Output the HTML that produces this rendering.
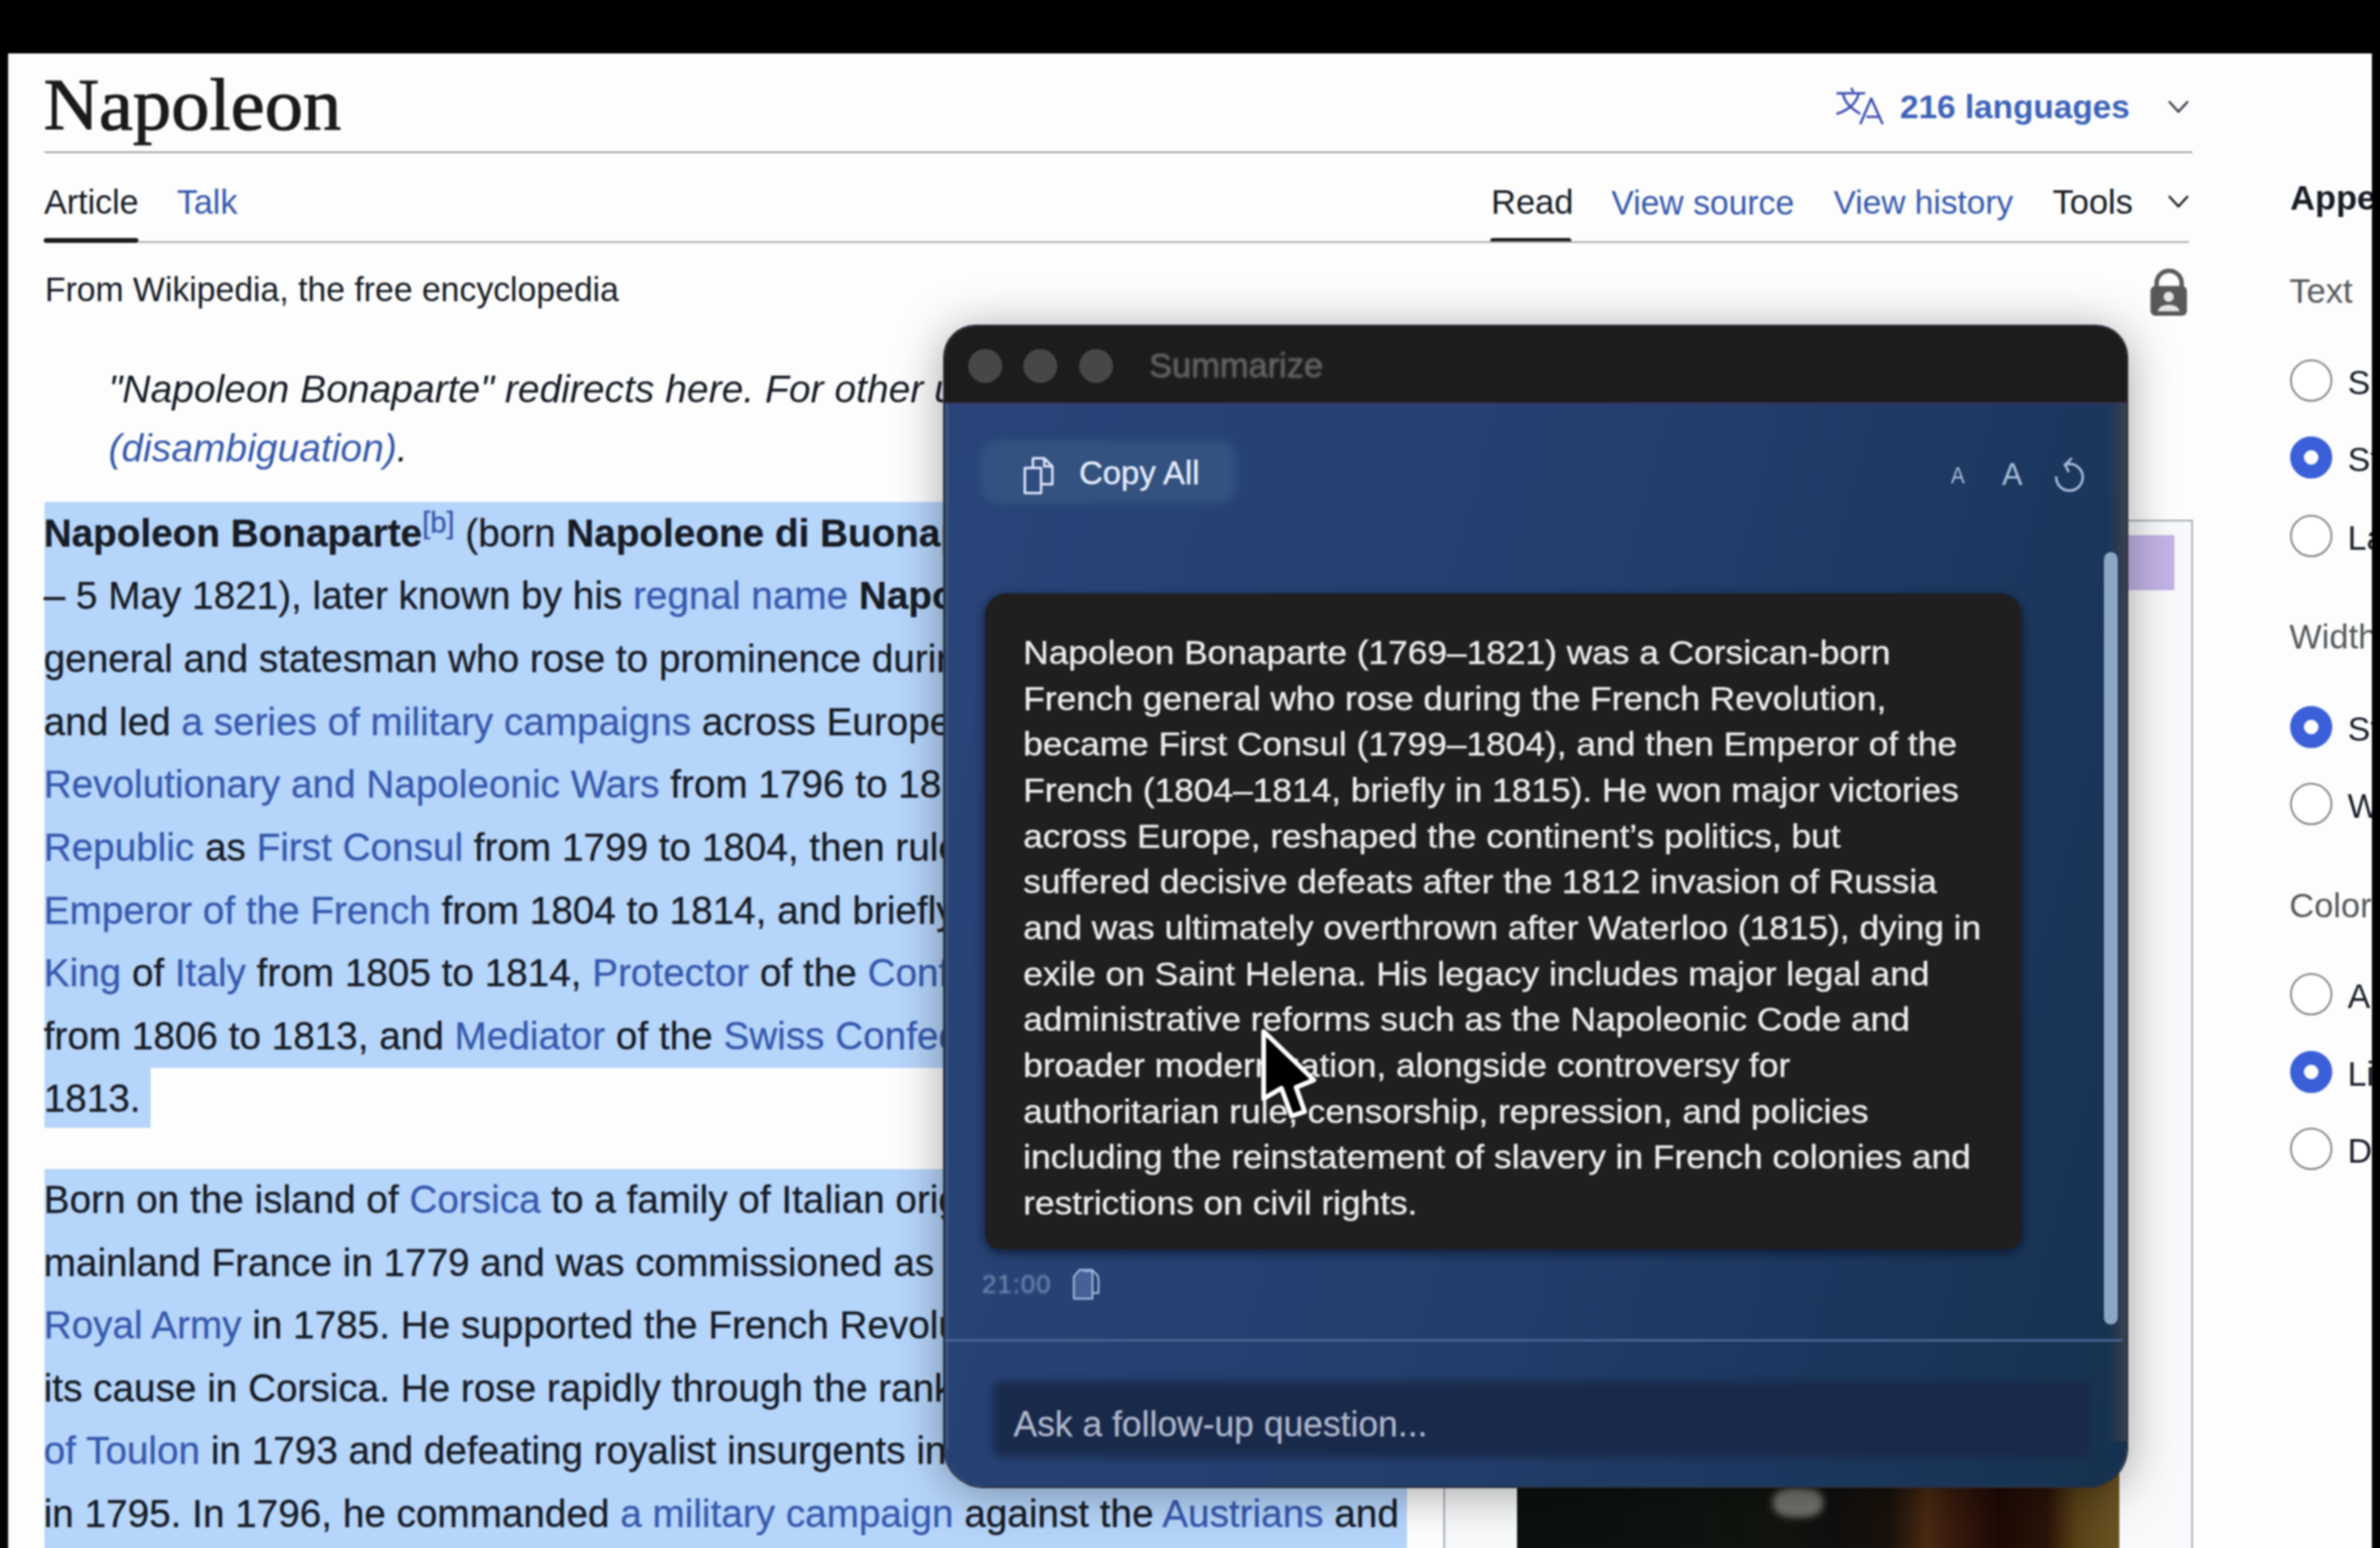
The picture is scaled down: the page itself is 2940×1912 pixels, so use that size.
<!DOCTYPE html>
<html><head><meta charset="utf-8">
<style>
*{margin:0;padding:0;box-sizing:border-box}
html,body{width:2940px;height:1912px;overflow:hidden;background:#000}
body{position:relative;font-family:"Liberation Sans",sans-serif;color:#161c26}
.a{position:absolute;white-space:pre;line-height:1}
.lk{color:#3659ad}
b{font-weight:700}
sup{vertical-align:baseline;line-height:0}
</style></head><body>
<div id="wrap" style="position:absolute;left:0;top:0;width:2960px;height:1940px;overflow:hidden;filter:blur(1px)">
<div style="position:absolute;left:10.0px;top:66.0px;width:2920.0px;height:1874.0px;background:#fdfdfd"></div>
<div class="a " style="left:54.0px;top:80.9px;font-size:94.5px;font-family:'Liberation Serif',serif;color:#1a1a1a;-webkit-text-stroke:1.3px #1a1a1a;transform:scaleY(0.955);transform-origin:0 79px">Napoleon</div>
<div style="position:absolute;left:55.0px;top:186.5px;width:2653.0px;height:2.0px;background:#9aa0a8"></div>
<svg style="position:absolute;left:2266px;top:107px" width="64" height="52" viewBox="0 0 64 52" fill="none" stroke="#4052b4" stroke-width="3" stroke-linecap="butt" stroke-linejoin="round">
<path d="M2.6 8.3 H37.9 M20.7 1.6 L23.4 6.5 M10.7 9.7 C13 19 18 25 32 33.7 M29.7 9.7 C27 20 20 28 2.6 33.7"/>
<path d="M32 46.4 L45.5 14.7 L59.6 46.4 M39.5 37.3 H55.5"/></svg>
<div class="a " style="left:2347.0px;top:111.6px;font-size:41.2px;font-weight:700;color:#3d63b8">216 languages</div>
<svg style="position:absolute;left:2677px;top:122px" width="28" height="22" viewBox="0 0 28 22" fill="none" stroke="#3a3f48" stroke-width="2.6" stroke-linecap="round" stroke-linejoin="round"><path d="M3 4 L14 16 L25 4"/></svg>
<div class="a " style="left:54.5px;top:229.4px;font-size:42px;">Article</div>
<div class="a lk" style="left:218.5px;top:229.4px;font-size:42px;">Talk</div>
<div style="position:absolute;left:54.0px;top:294.0px;width:117.0px;height:6.0px;background:#1a1a1a;border-radius:3px"></div>
<div class="a " style="left:1842.0px;top:229.0px;font-size:42.5px;">Read</div>
<div style="position:absolute;left:1841.0px;top:294.0px;width:100.0px;height:6.0px;background:#1a1a1a;border-radius:3px"></div>
<div class="a lk" style="left:1990.5px;top:229.8px;font-size:41.6px;">View source</div>
<div class="a lk" style="left:2265.0px;top:230.0px;font-size:41.3px;">View history</div>
<div class="a " style="left:2535.5px;top:229.0px;font-size:42.5px;">Tools</div>
<svg style="position:absolute;left:2677px;top:239px" width="28" height="22" viewBox="0 0 28 22" fill="none" stroke="#202122" stroke-width="2.6" stroke-linecap="round" stroke-linejoin="round"><path d="M3 4 L14 16 L25 4"/></svg>
<div style="position:absolute;left:171.0px;top:298.0px;width:2533.0px;height:2.0px;background:#a2a9b1"></div>
<div class="a " style="left:55.5px;top:336.7px;font-size:41.7px;">From Wikipedia, the free encyclopedia</div>
<svg style="position:absolute;left:2654px;top:330px" width="52" height="64" viewBox="0 0 52 64">
<path d="M10 27 V20 A15.5 15.5 0 0 1 41 20 V27" fill="none" stroke="#5c5c5e" stroke-width="5.5"/>
<rect x="2.5" y="23.3" width="45" height="36.7" rx="6" fill="#58585a"/>
<circle cx="25" cy="36.5" r="6.3" fill="#e4e4e4"/><path d="M11.5 54.5 Q13 46.5 25 46.5 Q37 46.5 38.5 54.5 Z" fill="#e4e4e4"/></svg>
<div class="a " style="left:134.0px;top:456.2px;font-size:48.2px;font-style:italic">"Napoleon Bonaparte" redirects here. For other uses, see <span class="lk">Napoleon Bonaparte</span></div>
<div class="a " style="left:134.0px;top:529.2px;font-size:48.2px;font-style:italic"><span class="lk">(disambiguation)</span>.</div>
<div style="position:absolute;left:55.0px;top:620.0px;width:1683.0px;height:698.6px;background:#b6d5fb"></div>
<div style="position:absolute;left:55.0px;top:1318.6px;width:131.0px;height:74.4px;background:#b6d5fb"></div>
<div class="a " style="left:54.0px;top:634.7px;font-size:47.8px;-webkit-text-stroke:0.35px currentColor"><b>Napoleon Bonaparte</b><sup class="lk" style="font-size:36px;position:relative;top:-17px">[b]</sup> (born <b>Napoleone di Buonaparte</b>; 15 August 1769</div>
<div class="a " style="left:54.0px;top:712.4px;font-size:47.8px;-webkit-text-stroke:0.35px currentColor">– 5 May 1821), later known by his <span class="lk">regnal name</span> <b>Napoleon I</b>, was a French</div>
<div class="a " style="left:54.0px;top:790.0px;font-size:47.8px;-webkit-text-stroke:0.35px currentColor">general and statesman who rose to prominence during the French Revolution</div>
<div class="a " style="left:54.0px;top:867.6px;font-size:47.8px;-webkit-text-stroke:0.35px currentColor">and led <span class="lk">a series of military campaigns</span> across Europe during the French</div>
<div class="a " style="left:54.0px;top:945.2px;font-size:47.8px;-webkit-text-stroke:0.35px currentColor"><span class="lk">Revolutionary and Napoleonic Wars</span> from 1796 to 1815. He led the French</div>
<div class="a " style="left:54.0px;top:1022.8px;font-size:47.8px;-webkit-text-stroke:0.35px currentColor"><span class="lk">Republic</span> as <span class="lk">First Consul</span> from 1799 to 1804, then ruled the French</div>
<div class="a " style="left:54.0px;top:1100.5px;font-size:47.8px;-webkit-text-stroke:0.35px currentColor"><span class="lk">Emperor of the French</span> from 1804 to 1814, and briefly again in 1815.</div>
<div class="a " style="left:54.0px;top:1178.1px;font-size:47.8px;-webkit-text-stroke:0.35px currentColor"><span class="lk">King</span> of <span class="lk">Italy</span> from 1805 to 1814, <span class="lk">Protector</span> of the <span class="lk">Confederation of the Rhine</span></div>
<div class="a " style="left:54.0px;top:1255.7px;font-size:47.8px;-webkit-text-stroke:0.35px currentColor">from 1806 to 1813, and <span class="lk">Mediator</span> of the <span class="lk">Swiss Confederation</span> from 1803 to</div>
<div class="a " style="left:54.0px;top:1333.3px;font-size:47.8px;-webkit-text-stroke:0.35px currentColor">1813.</div>
<div style="position:absolute;left:55.0px;top:1444.0px;width:1683.0px;height:496.0px;background:#b6d5fb"></div>
<div class="a " style="left:54.0px;top:1457.9px;font-size:47.8px;-webkit-text-stroke:0.35px currentColor">Born on the island of <span class="lk">Corsica</span> to a family of Italian origin, Napoleon moved to</div>
<div class="a " style="left:54.0px;top:1535.6px;font-size:47.8px;-webkit-text-stroke:0.35px currentColor">mainland France in 1779 and was commissioned as an officer in the French</div>
<div class="a " style="left:54.0px;top:1613.2px;font-size:47.8px;-webkit-text-stroke:0.35px currentColor"><span class="lk">Royal Army</span> in 1785. He supported the French Revolution in 1789 and promoted</div>
<div class="a " style="left:54.0px;top:1690.8px;font-size:47.8px;-webkit-text-stroke:0.35px currentColor">its cause in Corsica. He rose rapidly through the ranks after winning the <span class="lk">Siege</span></div>
<div class="a " style="left:54.0px;top:1768.4px;font-size:47.8px;-webkit-text-stroke:0.35px currentColor"><span class="lk">of Toulon</span> in 1793 and defeating royalist insurgents in Paris on 13 Vendémiaire</div>
<div class="a " style="left:54.0px;top:1846.0px;font-size:47.8px;-webkit-text-stroke:0.35px currentColor">in 1795. In 1796, he commanded <span class="lk">a military campaign</span> against the <span class="lk">Austrians</span> and</div>
<div style="position:absolute;left:1783.0px;top:642.0px;width:926.0px;height:1298.0px;border:2px solid #a2a9b1;border-bottom:none;background:#f8f9fa"></div>
<div style="position:absolute;left:1806.0px;top:661.0px;width:880.0px;height:68.0px;background:#c3b3e6"></div>
<div style="position:absolute;left:1874.0px;top:1780.0px;width:744.0px;height:160.0px;background:linear-gradient(90deg,#0b110d 0%,#0e1510 30%,#13140f 45%,#101010 52%,#1a120c 62%,#4a2a12 68%,#3a1c0e 72%,#1e0a06 80%,#2a1408 88%,#5a4218 93%,#6a5424 100%)"></div>
<div style="position:absolute;left:2190.0px;top:1838.0px;width:62.0px;height:36.0px;background:#74746e;border-radius:40%;filter:blur(4px)"></div>
<div class="a " style="left:2829.0px;top:223.5px;font-size:42.5px;font-weight:700">Appearance</div>
<div class="a " style="left:2828.0px;top:338.5px;font-size:42.5px;color:#54595d">Text</div>
<div style="position:absolute;left:2829.0px;top:444.0px;width:52.0px;height:52.0px;border-radius:50%;border:2.5px solid #72777d;background:#fff"></div>
<div class="a " style="left:2900.0px;top:451.9px;font-size:42px;">Small</div>
<div style="position:absolute;left:2829.0px;top:539.0px;width:52.0px;height:52.0px;border-radius:50%;border:17px solid #3a5fd8;background:#fff"></div>
<div class="a " style="left:2900.0px;top:546.9px;font-size:42px;">Standard</div>
<div style="position:absolute;left:2829.0px;top:636.0px;width:52.0px;height:52.0px;border-radius:50%;border:2.5px solid #72777d;background:#fff"></div>
<div class="a " style="left:2900.0px;top:643.9px;font-size:42px;">Large</div>
<div class="a " style="left:2828.0px;top:766.0px;font-size:42.5px;color:#54595d">Width</div>
<div style="position:absolute;left:2829.0px;top:872.0px;width:52.0px;height:52.0px;border-radius:50%;border:17px solid #3a5fd8;background:#fff"></div>
<div class="a " style="left:2900.0px;top:879.9px;font-size:42px;">Standard</div>
<div style="position:absolute;left:2829.0px;top:967.0px;width:52.0px;height:52.0px;border-radius:50%;border:2.5px solid #72777d;background:#fff"></div>
<div class="a " style="left:2900.0px;top:974.9px;font-size:42px;">Wide</div>
<div class="a " style="left:2828.0px;top:1098.0px;font-size:42.5px;color:#54595d">Color (beta)</div>
<div style="position:absolute;left:2829.0px;top:1202.0px;width:52.0px;height:52.0px;border-radius:50%;border:2.5px solid #72777d;background:#fff"></div>
<div class="a " style="left:2900.0px;top:1209.9px;font-size:42px;">Automatic</div>
<div style="position:absolute;left:2829.0px;top:1298.0px;width:52.0px;height:52.0px;border-radius:50%;border:17px solid #3a5fd8;background:#fff"></div>
<div class="a " style="left:2900.0px;top:1305.9px;font-size:42px;">Light</div>
<div style="position:absolute;left:2829.0px;top:1393.0px;width:52.0px;height:52.0px;border-radius:50%;border:2.5px solid #72777d;background:#fff"></div>
<div class="a " style="left:2900.0px;top:1400.9px;font-size:42px;">Dark</div>
<div style="position:absolute;left:1167px;top:403px;width:1460px;height:1433px;border-radius:38px 38px 48px 48px;overflow:hidden;background:linear-gradient(105deg,#29457a 0%,#24406f 45%,#1d3860 75%,#16324f 100%);box-shadow:0 0 0 2px #2a2f3a,0 6px 60px rgba(0,0,0,0.38)">
<div style="position:absolute;left:0;top:0;width:100%;height:96px;background:#1c1c1c;border-bottom:2px solid #3a3560"></div>
<div style="position:absolute;left:29px;top:28px;width:42px;height:42px;border-radius:50%;background:#474747"></div>
<div style="position:absolute;left:97px;top:28px;width:42px;height:42px;border-radius:50%;background:#474747"></div>
<div style="position:absolute;left:166px;top:28px;width:42px;height:42px;border-radius:50%;background:#474747"></div>
</div>
<div class="a " style="left:1419.5px;top:431.0px;font-size:42.5px;color:#666;-webkit-text-stroke:0.8px #666;filter:blur(1.2px)">Summarize</div>
<div style="position:absolute;left:1211.0px;top:544.0px;width:315.0px;height:78.0px;background:#34527f;border-radius:22px;filter:blur(5px)"></div>
<svg style="position:absolute;left:1262px;top:560px" width="46" height="52" viewBox="0 0 46 52" fill="none" stroke="#dfe8ff" stroke-width="3" stroke-linejoin="round">
<path d="M14 6 H28 L38 16 V38 H14 Z"/><path d="M4 18 H24 V49 H4 Z" fill="#2e4c7c"/><path d="M28 6 V16 H38"/></svg>
<div class="a " style="left:1333.0px;top:564.1px;font-size:40.6px;color:#e6eeff;-webkit-text-stroke:0.4px #e6eeff">Copy All</div>
<div class="a " style="left:2410.0px;top:572.1px;font-size:30px;color:#a9bddc;transform:scaleX(0.85);transform-origin:left">A</div>
<div class="a " style="left:2473.0px;top:566.8px;font-size:38px;color:#a9bddc">A</div>
<svg style="position:absolute;left:2536px;top:560px" width="42" height="48" viewBox="0 0 42 48" fill="none" stroke="#a9bddc" stroke-width="3" stroke-linecap="round" stroke-linejoin="round">
<path d="M4 29.5 A16.4 16.4 0 1 0 20.4 13.1 L15 13.6"/><path d="M22.5 6.5 L15 14.2 L19 22"/></svg>
<div style="position:absolute;left:2604.0px;top:498.0px;width:23.0px;height:1282.0px;background:linear-gradient(90deg,rgba(52,60,74,0) 0%,rgba(52,60,74,0.6) 50%,#3a4250 100%)"></div>
<div style="position:absolute;left:1169.0px;top:498.0px;width:2.0px;height:1292.0px;background:#4a5a80"></div>
<div style="position:absolute;left:2599.0px;top:682.0px;width:17.0px;height:954.0px;background:#8ea6c6;border-radius:9px"></div>
<div style="position:absolute;left:1217.0px;top:733.0px;width:1280.0px;height:810.0px;background:#201e1f;border-radius:26px 26px 20px 20px;box-shadow:0 4px 12px 2px rgba(5,10,25,0.55)"></div>
<div class="a " style="left:1264.0px;top:783.9px;font-size:43.6px;color:#ececec;-webkit-text-stroke:0.5px #ececec;transform:scaleY(0.93);transform-origin:0 36.9px">Napoleon Bonaparte (1769–1821) was a Corsican-born</div>
<div class="a " style="left:1264.0px;top:840.6px;font-size:43.6px;color:#ececec;-webkit-text-stroke:0.5px #ececec;transform:scaleY(0.93);transform-origin:0 36.9px">French general who rose during the French Revolution,</div>
<div class="a " style="left:1264.0px;top:897.3px;font-size:43.6px;color:#ececec;-webkit-text-stroke:0.5px #ececec;transform:scaleY(0.93);transform-origin:0 36.9px">became First Consul (1799–1804), and then Emperor of the</div>
<div class="a " style="left:1264.0px;top:953.9px;font-size:43.6px;color:#ececec;-webkit-text-stroke:0.5px #ececec;transform:scaleY(0.93);transform-origin:0 36.9px">French (1804–1814, briefly in 1815). He won major victories</div>
<div class="a " style="left:1264.0px;top:1010.6px;font-size:43.6px;color:#ececec;-webkit-text-stroke:0.5px #ececec;transform:scaleY(0.93);transform-origin:0 36.9px">across Europe, reshaped the continent’s politics, but</div>
<div class="a " style="left:1264.0px;top:1067.3px;font-size:43.6px;color:#ececec;-webkit-text-stroke:0.5px #ececec;transform:scaleY(0.93);transform-origin:0 36.9px">suffered decisive defeats after the 1812 invasion of Russia</div>
<div class="a " style="left:1264.0px;top:1124.0px;font-size:43.6px;color:#ececec;-webkit-text-stroke:0.5px #ececec;transform:scaleY(0.93);transform-origin:0 36.9px">and was ultimately overthrown after Waterloo (1815), dying in</div>
<div class="a " style="left:1264.0px;top:1180.7px;font-size:43.6px;color:#ececec;-webkit-text-stroke:0.5px #ececec;transform:scaleY(0.93);transform-origin:0 36.9px">exile on Saint Helena. His legacy includes major legal and</div>
<div class="a " style="left:1264.0px;top:1237.3px;font-size:43.6px;color:#ececec;-webkit-text-stroke:0.5px #ececec;transform:scaleY(0.93);transform-origin:0 36.9px">administrative reforms such as the Napoleonic Code and</div>
<div class="a " style="left:1264.0px;top:1294.0px;font-size:43.6px;color:#ececec;-webkit-text-stroke:0.5px #ececec;transform:scaleY(0.93);transform-origin:0 36.9px">broader modernization, alongside controversy for</div>
<div class="a " style="left:1264.0px;top:1350.7px;font-size:43.6px;color:#ececec;-webkit-text-stroke:0.5px #ececec;transform:scaleY(0.93);transform-origin:0 36.9px">authoritarian rule, censorship, repression, and policies</div>
<div class="a " style="left:1264.0px;top:1407.4px;font-size:43.6px;color:#ececec;-webkit-text-stroke:0.5px #ececec;transform:scaleY(0.93);transform-origin:0 36.9px">including the reinstatement of slavery in French colonies and</div>
<div class="a " style="left:1264.0px;top:1464.1px;font-size:43.6px;color:#ececec;-webkit-text-stroke:0.5px #ececec;transform:scaleY(0.93);transform-origin:0 36.9px">restrictions on civil rights.</div>
<div class="a " style="left:1213.0px;top:1569.9px;font-size:32px;color:#7d90b6;letter-spacing:1.2px;filter:blur(1.3px)">21:00</div>
<svg style="position:absolute;left:1324px;top:1566px" width="40" height="42" viewBox="0 0 40 42" fill="none" stroke="#9fb3d8" stroke-width="2.4" stroke-linejoin="round">
<path d="M14 4 H26 Q33 8 33 15 V31 H26"/><path d="M2.5 11 L9.5 2.5 H25.5 V38 H2.5 Z" fill="rgba(110,135,190,0.45)"/></svg>
<div style="position:absolute;left:1167.0px;top:1654.0px;width:1455.0px;height:3.0px;background:#4a6290"></div>
<div style="position:absolute;left:1226.0px;top:1706.0px;width:1356.0px;height:94.0px;background:#19294a;border-radius:10px;filter:blur(6px)"></div>
<div class="a " style="left:1252.0px;top:1737.4px;font-size:43.8px;color:#aeb8cc;-webkit-text-stroke:0.3px #aeb8cc">Ask a follow-up question...</div>
<svg style="position:absolute;left:1550px;top:1262px" width="90" height="130" viewBox="0 0 90 130">
<path d="M11 12 L11 95 L33 82 L45.5 116.5 L61.7 111 L51 81 L73 72 Z" fill="#000" stroke="#fff" stroke-width="5.8" stroke-linejoin="round"/></svg>
<div style="position:absolute;left:2930.0px;top:0.0px;width:30.0px;height:1940.0px;background:#000"></div>
<div style="position:absolute;left:0.0px;top:0.0px;width:10.0px;height:1940.0px;background:#000"></div>
<div style="position:absolute;left:0.0px;top:0.0px;width:2960.0px;height:66.0px;background:#000"></div>
</div>
</body></html>
